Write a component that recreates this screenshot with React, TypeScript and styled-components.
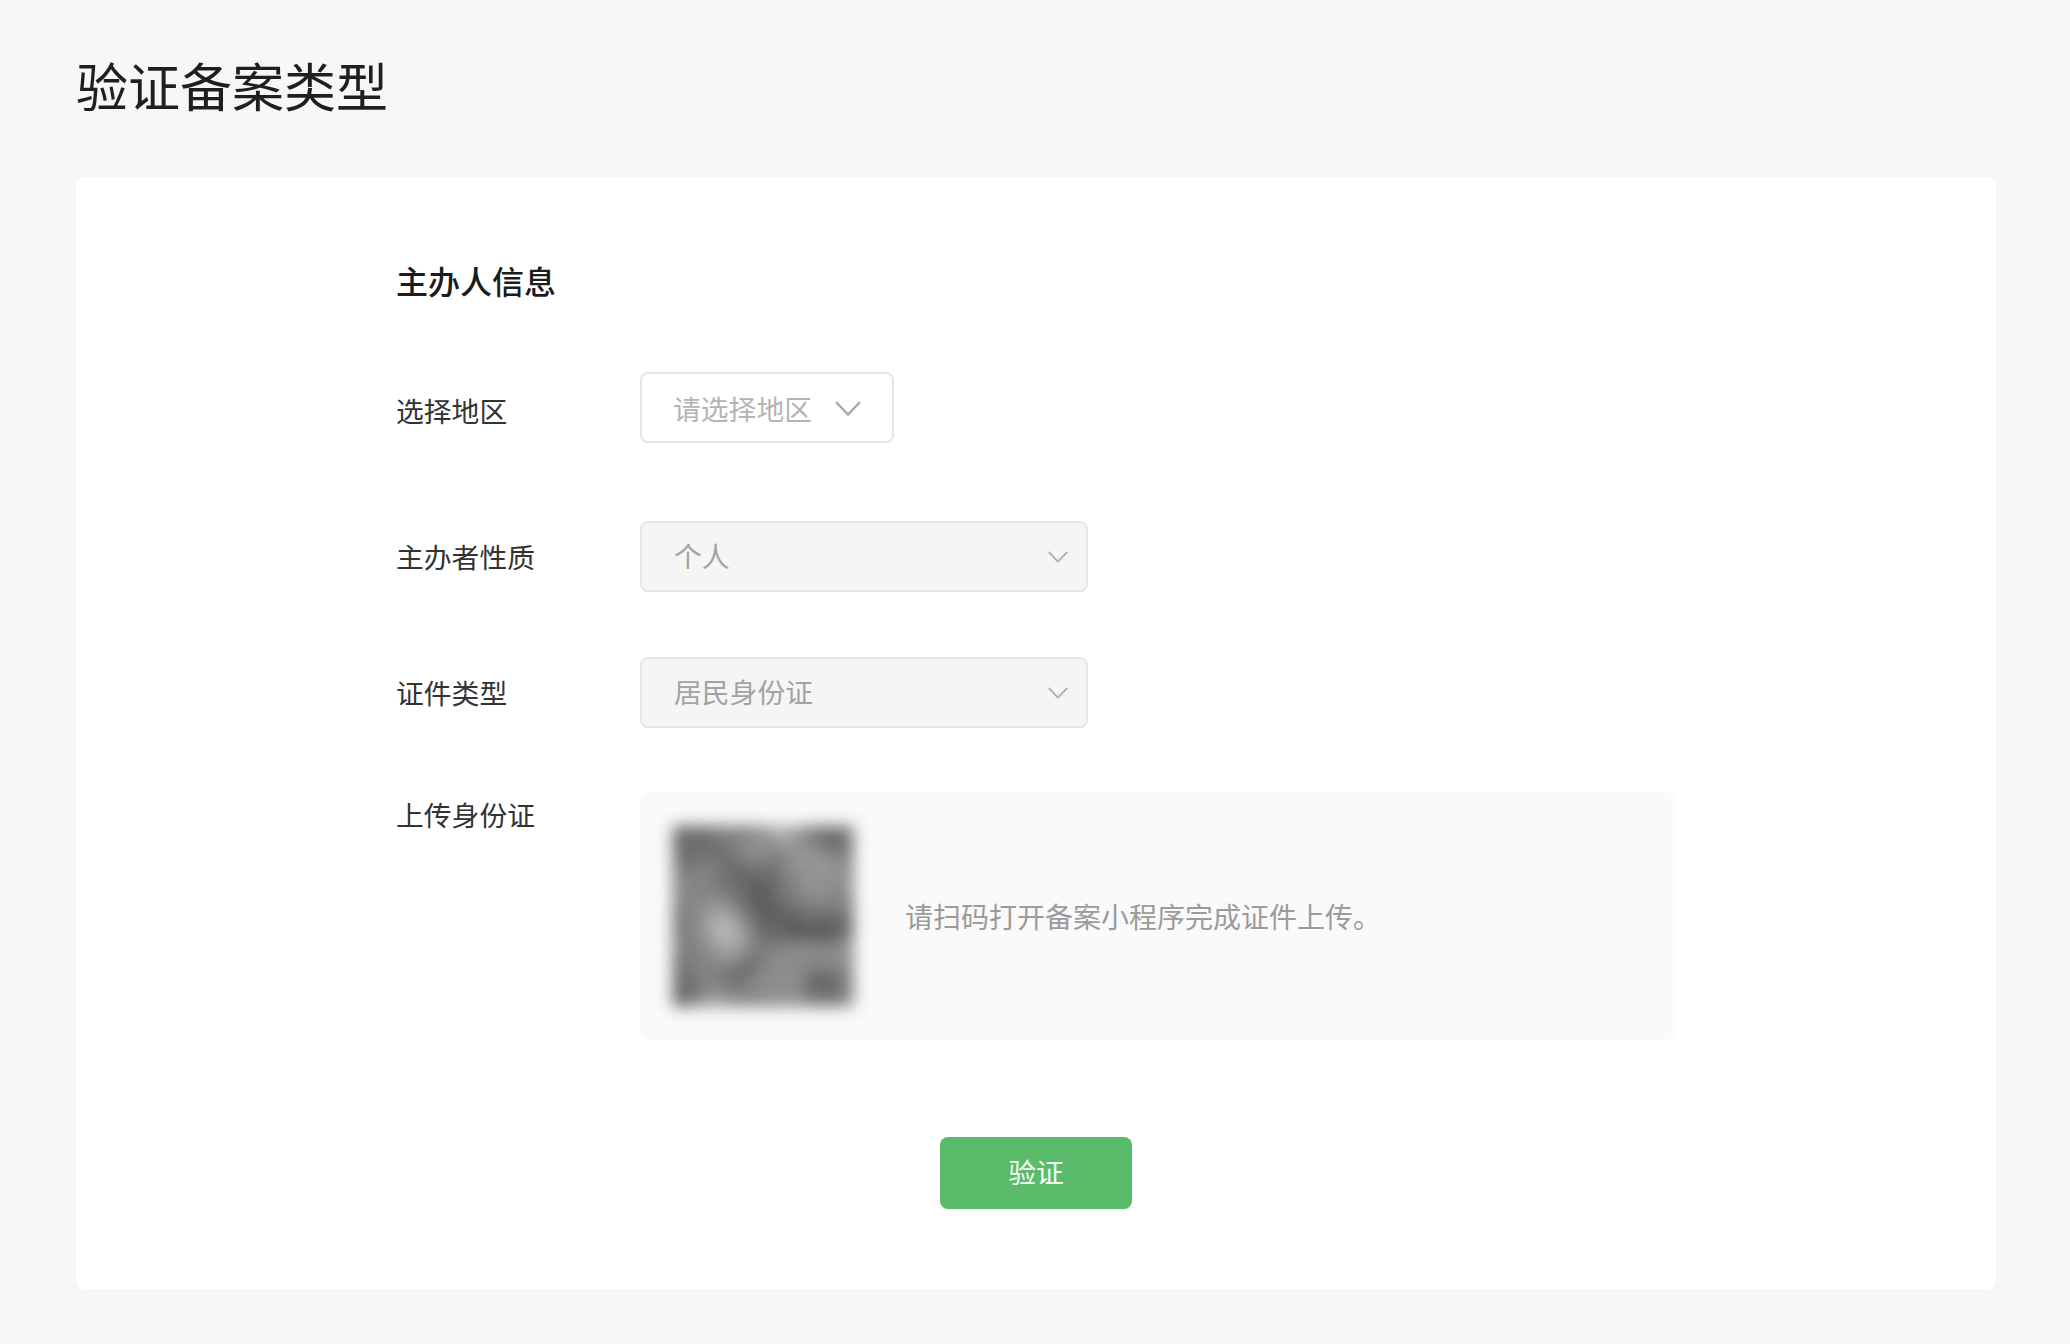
import React from 'react';
import styled, { createGlobalStyle } from 'styled-components';

const GlobalStyle = createGlobalStyle`
    html, body {
        margin: 0;
        padding: 0;
        background: #f6f7f9;
    }
    * {
        box-sizing: border-box;
    }
`;

// gray level of the blurred code, row by row
const QR_CELLS = [
    [96, 92, 100, 110, 120, 112, 128, 150, 170, 150, 120, 100, 96, 110],
    [92, 104, 96, 100, 112, 130, 140, 128, 150, 140, 130, 110, 90, 104],
    [100, 96, 108, 104, 100, 116, 132, 118, 110, 140, 150, 140, 132, 120],
    [120, 110, 128, 110, 96, 88, 100, 96, 116, 136, 130, 146, 140, 130],
    [118, 130, 122, 104, 100, 92, 80, 88, 108, 120, 144, 136, 128, 136],
    [126, 124, 120, 128, 108, 96, 76, 84, 104, 118, 126, 134, 126, 122],
    [112, 128, 136, 150, 136, 104, 84, 78, 90, 100, 112, 108, 116, 110],
    [104, 120, 144, 176, 170, 130, 96, 84, 86, 80, 92, 84, 88, 92],
    [110, 126, 140, 172, 180, 150, 104, 96, 92, 76, 78, 72, 84, 100],
    [116, 118, 130, 146, 160, 140, 116, 116, 126, 130, 136, 124, 128, 140],
    [100, 122, 116, 130, 136, 104, 100, 128, 134, 124, 130, 128, 136, 130],
    [96, 110, 126, 112, 100, 92, 120, 132, 128, 140, 110, 96, 104, 124],
    [88, 100, 120, 126, 108, 116, 134, 128, 138, 132, 96, 84, 92, 116],
    [92, 112, 140, 150, 132, 130, 124, 136, 130, 140, 120, 112, 110, 130],
];

const CELL = 12;

const BlurredCode = () => (
    <QrSvg viewBox="-22 -22 212 212">
        <defs>
            <filter id="code-blur" x="-20%" y="-20%" width="140%" height="140%">
                <feGaussianBlur stdDeviation="7.5" />
            </filter>
        </defs>
        <g filter="url(#code-blur)">
            {QR_CELLS.map((row, y) =>
                row.map((v, x) => (
                    <rect
                        key={`${x}-${y}`}
                        x={x * CELL}
                        y={y * CELL}
                        width={CELL + 0.5}
                        height={CELL + 0.5}
                        fill={`rgb(${v},${v},${v})`}
                    />
                ))
            )}
        </g>
    </QrSvg>
);

const Chevron = ({ large }: { large?: boolean }) => (
    <ChevronSvg $large={large} viewBox="0 0 26 15">
        <path d="M1 1 L13 13.5 L25 1" />
    </ChevronSvg>
);

const App = () => {
    return (
        <Page>
            <GlobalStyle />
            <PageTitle>验证备案类型</PageTitle>
            <Card>
                <SectionTitle>主办人信息</SectionTitle>

                <Row $top={67}>
                    <Label>选择地区</Label>
                    <RegionSelect>
                        <SelectText $placeholder>请选择地区</SelectText>
                        <Chevron large />
                    </RegionSelect>
                </Row>

                <Row $top={78}>
                    <Label $raised>主办者性质</Label>
                    <LockedSelect>
                        <SelectText>个人</SelectText>
                        <Chevron />
                    </LockedSelect>
                </Row>

                <Row $top={65}>
                    <Label $raised>证件类型</Label>
                    <LockedSelect>
                        <SelectText>居民身份证</SelectText>
                        <Chevron />
                    </LockedSelect>
                </Row>

                <UploadRow>
                    <UploadLabel>上传身份证</UploadLabel>
                    <UploadBox>
                        <BlurredCode />
                        <UploadHint>请扫码打开备案小程序完成证件上传。</UploadHint>
                    </UploadBox>
                </UploadRow>

                <Actions>
                    <VerifyButton>验证</VerifyButton>
                </Actions>
            </Card>
        </Page>
    );
};

export default App;

const Page = styled.div`
    width: 2070px;
    height: 1344px;
    overflow: hidden;
    padding: 0 74px 0 76px;
    background: #f6f7f9;
    font-family: "Noto Sans CJK SC", "Noto Sans", sans-serif;
`;

const PageTitle = styled.h1`
    margin: 0;
    height: 177px;
    padding-top: 51px;
    font-size: 52px;
    line-height: 68px;
    font-weight: 400;
    color: #1f1f1f;
`;

const Card = styled.section`
    height: 1112px;
    padding: 0 320px;
    background: #ffffff;
    border-radius: 8px;
`;

const SectionTitle = styled.h2`
    margin: 0;
    padding-top: 80px;
    height: 128px;
    font-size: 32px;
    line-height: 46px;
    font-weight: 500;
    color: #1c1c1c;
`;

const Row = styled.div<{ $top: number }>`
    display: flex;
    align-items: center;
    height: 71px;
    margin-top: ${(p) => p.$top}px;
`;

const Label = styled.div<{ $raised?: boolean }>`
    width: 244px;
    flex-shrink: 0;
    padding: ${(p) => (p.$raised ? '0 0 2px' : '4px 0 0')};
    font-size: 27.8px;
    line-height: 40px;
    color: #333333;
`;

const SelectBase = styled.div`
    display: flex;
    align-items: center;
    justify-content: space-between;
    height: 100%;
    border: 2px solid #e3e5e6;
    border-radius: 8px;
`;

const RegionSelect = styled(SelectBase)`
    width: 254px;
    padding: 0 31px 0 31px;
    background: #ffffff;
`;

const LockedSelect = styled(SelectBase)`
    width: 448px;
    padding: 0 18px 0 32px;
    background: #f5f5f5;
`;

const SelectText = styled.span<{ $placeholder?: boolean }>`
    padding-bottom: ${(p) => (p.$placeholder ? 0 : 3)}px;
    font-size: 27.8px;
    line-height: 40px;
    white-space: nowrap;
    color: ${(p) => (p.$placeholder ? '#b4b4b4' : '#a3a3a3')};
`;

const ChevronSvg = styled.svg<{ $large?: boolean }>`
    width: ${(p) => (p.$large ? 26 : 20)}px;
    height: ${(p) => (p.$large ? 15 : 12)}px;
    flex-shrink: 0;
    margin-top: ${(p) => (p.$large ? 2 : 1)}px;

    path {
        fill: none;
        stroke: ${(p) => (p.$large ? '#a8a8a8' : '#b0b0b0')};
        stroke-width: 2.4;
    }
`;

const UploadRow = styled.div`
    display: flex;
    margin-top: 64px;
`;

const UploadLabel = styled(Label)`
    padding-top: 2px;
`;

const UploadBox = styled.div`
    display: flex;
    align-items: center;
    width: 1036px;
    height: 248px;
    padding-left: 9px;
    background: #fafafa;
    border-radius: 8px;
`;

const QrSvg = styled.svg`
    width: 228px;
    height: 228px;
    flex-shrink: 0;
    opacity: 0.92;
`;

const UploadHint = styled.span`
    margin-left: 28px;
    font-size: 28px;
    line-height: 40px;
    color: #9b9b9b;
    white-space: nowrap;
`;

const Actions = styled.div`
    display: flex;
    justify-content: center;
    margin-top: 97px;
`;

const VerifyButton = styled.button`
    width: 192px;
    height: 72px;
    padding: 0 0 4px;
    border: none;
    border-radius: 8px;
    background: #5abb6b;
    color: #f2fbf3;
    font-family: inherit;
    font-size: 27.8px;
    line-height: 40px;
`;
